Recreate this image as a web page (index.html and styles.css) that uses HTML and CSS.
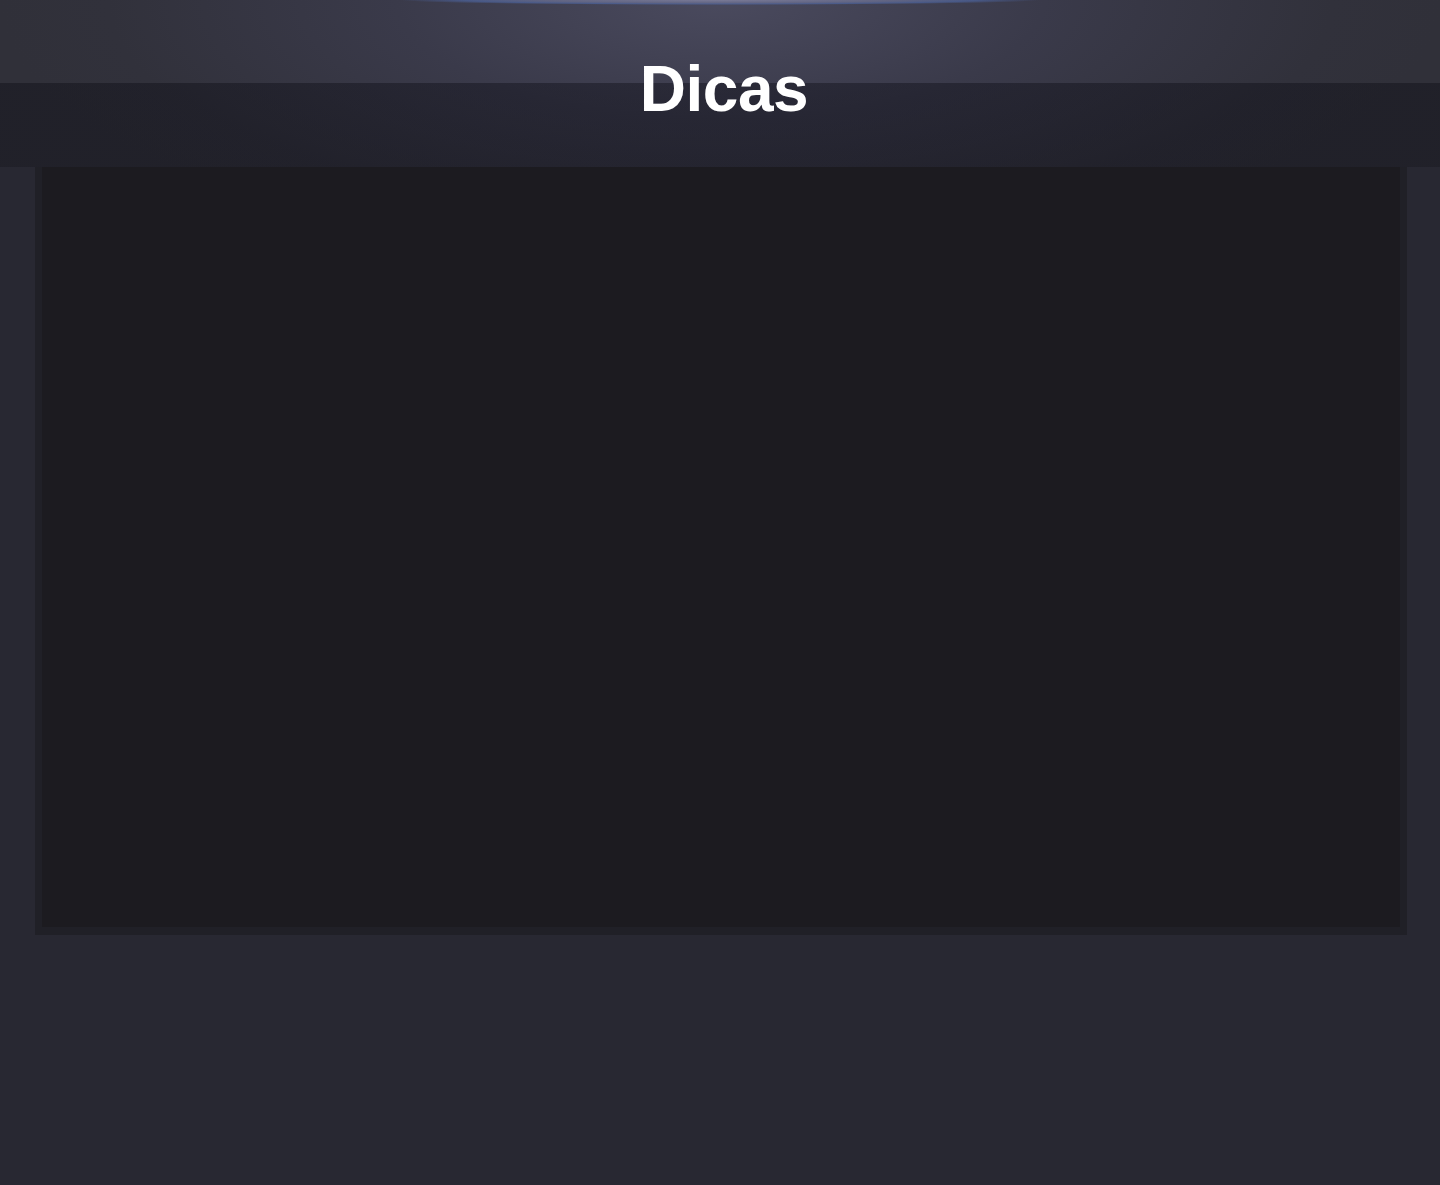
FILE: index.html
```html
<!DOCTYPE html>
<html lang="pt">
<head>
<meta charset="utf-8">
<title>Dicas</title>
<link rel="stylesheet" href="styles.css">
</head>
<body>
<header class="site-header">
  <h1 class="title">Dicas</h1>
</header>
<main class="content">
  <div class="panel"></div>
</main>
</body>
</html>
```
FILE: styles.css
```css
html, body {
  margin: 0;
  padding: 0;
}
body {
  background: #282832;
  font-family: "Liberation Sans", Arial, sans-serif;
  min-height: 1185px;
}
.site-header {
  height: 167px;
  display: flex;
  align-items: flex-start;
  justify-content: center;
  box-sizing: border-box;
  padding-top: 57px;
  padding-left: 8px;
  background:
    linear-gradient(to bottom, rgba(0,0,0,0) 83px, rgba(8,8,16,0.38) 83px),
    radial-gradient(ellipse 320px 5px at 50% 0, rgba(130,130,160,0.85) 0%, rgba(110,115,150,0.7) 55%, rgba(80,110,180,0.55) 80%, rgba(80,110,180,0) 100%),
    radial-gradient(ellipse 720px 260px at 50% 0, #4a4a5e 0%, #3a3a4a 45%, #31313b 85%, #303039 100%);
  background-color: #303039;
}
.title {
  margin: 0;
  color: #ffffff;
  font-size: 64px;
  line-height: 64px;
  letter-spacing: -0.5px;
  font-weight: bold;
}
.content {
  margin: 0 33px 0 35px;
}
.panel {
  height: 760px;
  background: #1c1b20;
  border: 7px solid #202027;
  border-top: 0;
  border-bottom-width: 8px;
}
```
